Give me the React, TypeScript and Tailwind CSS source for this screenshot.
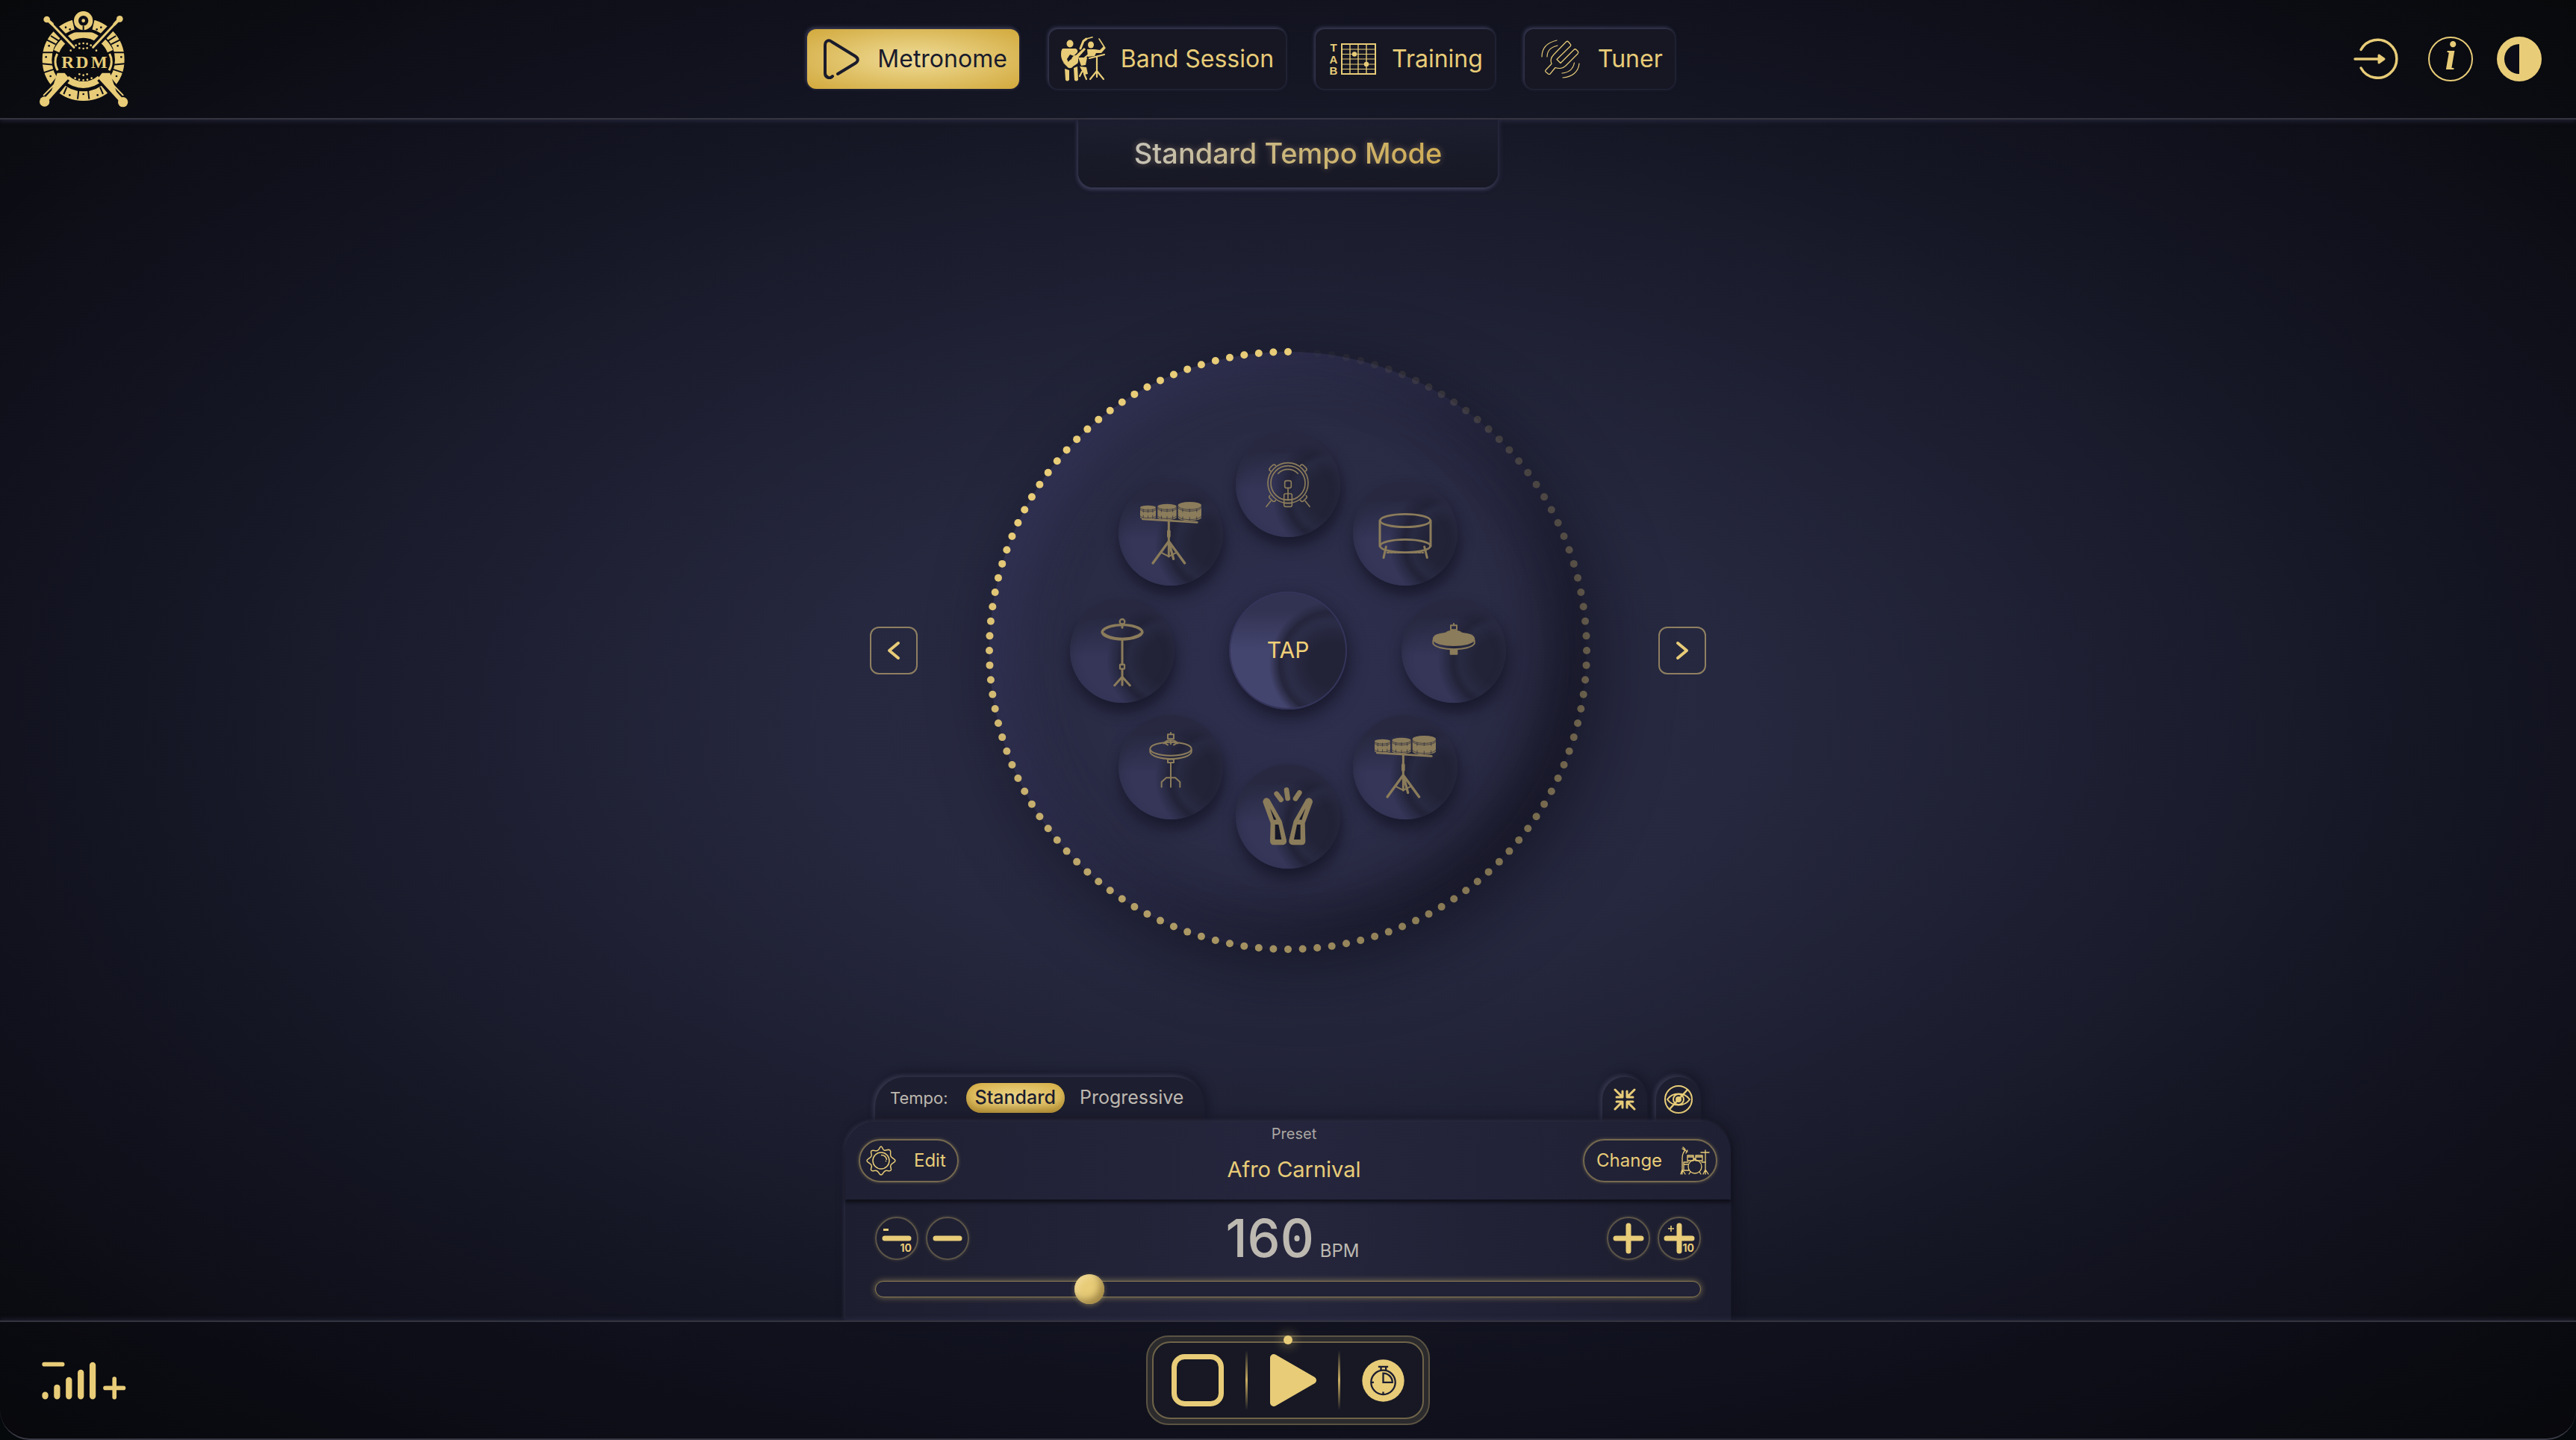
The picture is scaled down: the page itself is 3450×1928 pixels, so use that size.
import React from 'react';

const GOLD = '#e8cc78';
const NIGHT = '#0c0d16';
const DOT_COUNT = 128;

const Logo = () => (
    <svg viewBox="158 42 360 390" className="h-[130px] w-[120px]" role="img" aria-label="RDM">
        <g fill="none" stroke={GOLD}>
            <circle cx="337" cy="240" r="146" strokeWidth="38" />
            <path d="M274 161 A101 101 0 0 1 400 161" strokeWidth="27" />
            <path d="M270 315 A101 101 0 0 0 404 315" strokeWidth="27" />
            <path d="M229 206 A113 113 0 0 1 262 162" strokeWidth="24" />
            <path d="M445 206 A113 113 0 0 0 412 162" strokeWidth="24" />
            <path d="M232 216 C221 236 221 262 234 283" strokeWidth="9" />
            <path d="M442 216 C453 236 453 262 440 283" strokeWidth="9" />
        </g>
        {/* gaps cut through the rim */}
        <g stroke={NIGHT} strokeWidth="6">
            <path d="M165 211 H222 M452 211 H509 M170 256 L218 260 M504 256 L456 260 M176 292 L220 278 M498 292 L454 278 M190 160 L226 178 M484 160 L448 178 M206 144 L238 164 M468 144 L436 164" />
            <path d="M270 350 L258 378 M404 350 L416 378 M318 362 L314 398 M356 362 L360 398 M222 116 L250 146 M452 116 L424 146" />
        </g>
        <path d="M292 78 L304 130 H370 L382 78 Z" fill={NIGHT} />
        <g stroke={NIGHT} strokeWidth="30">
            <path d="M190 77 L300 192 M483 75 L373 192" />
            <path d="M181 408 L262 308 M497 411 L412 308" strokeWidth="50" />
        </g>
        <path d="M232 293 H262 L279 314 L200 392 M444 293 H412 L396 314 L478 392" fill={GOLD} />
        <g stroke={GOLD} strokeLinecap="round">
            <path d="M190 77 L212 97 M483 75 L462 97" strokeWidth="12" />
            <path d="M200 86 L299 190 M473 86 L376 190" strokeWidth="9" />
            <path d="M181 408 L262 318 M497 411 L412 318" strokeWidth="18" />
            <path d="M178 382 L236 324 M496 382 L440 324" strokeWidth="6" />
        </g>
        <g fill={GOLD}>
            <circle cx="190" cy="78" r="13" />
            <circle cx="483" cy="76" r="13" />
            <circle cx="181" cy="408" r="20" />
            <circle cx="496" cy="410" r="20" />
            <circle cx="337" cy="83" r="38" />
        </g>
        <circle cx="337" cy="83" r="20" fill={NIGHT} />
        <circle cx="337" cy="83" r="7" fill={GOLD} />
        <path d="M337 103 V122" stroke={NIGHT} strokeWidth="6" />
        <g fill={NIGHT}>
            {[[266, 110], [283, 118], [391, 118], [408, 110], [199, 184], [475, 184], [187, 229], [489, 229], [205, 306], [470, 306], [282, 382], [337, 378], [394, 382]].map(([x, y]) => (
                <circle key={`${x}-${y}`} cx={x} cy={y} r="4" />
            ))}
        </g>
        <g fill={GOLD}>
            {[[307, 182], [321, 176], [337, 174], [352, 176], [367, 182], [321, 193], [337, 195], [352, 193], [286, 203], [389, 203], [321, 298], [337, 302], [352, 298], [304, 314], [320, 320], [337, 322], [353, 320], [370, 314]].map(([x, y]) => (
                <circle key={`${x}-${y}`} cx={x} cy={y} r="4" />
            ))}
        </g>
        <g fill={GOLD} fontFamily="'Liberation Serif', serif" fontWeight="700" fontSize="70" textAnchor="middle">
            <text x="274" y="274">R</text>
            <text x="332" y="274">D</text>
            <text x="400" y="274">M</text>
        </g>
    </svg>
);

const MetronomeIcon = () => (
    <svg viewBox="0 0 48 54" className="h-[54px] w-12" fill="none" stroke="#1a1b2b" strokeWidth="4" strokeLinecap="round" strokeLinejoin="round">
        <path d="M12 50 C9 54 2 52 2 46 V9 C2 2 7 1 11 4 L42 23 C47 26 47 30 42 33 L19 47" />
    </svg>
);

const BandIcon = () => (
    <svg viewBox="0 0 60 60" className="size-[60px]" fill={GOLD} stroke="none">
        <ellipse cx="12" cy="9.5" rx="4.5" ry="5" />
        <path d="M3 16 H18 C21 16 23 18 22 21 L17 26 L12 24 L8 30 L10 35 L7 38 C3 35 0 30 0 24 C0 19 1 16 3 16 Z" />
        <path d="M2 34 L8 40 C10 43 14 43 16 40 L22 36 C24 33 22 30 24 27 L33 17 L31 15 L20 25 C17 25 15 27 14 30 C10 33 8 35 7 37 Z" />
        <path d="M5 43 L11 45 V58 Q8 61 6 58 Z M17 42 L22 40 L23 58 Q20 61 18 58 Z" />
        <ellipse cx="40" cy="11" rx="4" ry="4.5" />
        <path d="M35 17 H45 L52 18 L57 13 L60 15 L54 22 L47 22 L45 26 L36 27 Z M23 28 H35 L33 38 L27 39 Z M25 40 L34 41 L36 50 L31 51 Z" />
        <g fill="none" stroke={GOLD} strokeLinecap="round">
            <path d="M26 16 L30 6 L34 3" strokeWidth="3" />
            <path d="M34 3 L42 0.8 M58 14 L51 3" strokeWidth="1.6" />
            <path d="M38 29 L58 24 M32 28 L37 24" strokeWidth="2.2" />
            <path d="M48 27 V48 M48 46 L39 57 M48 46 L57 57 M48 46 V54 M28 47 L25 53 M31 50 L34 57" strokeWidth="2.2" />
        </g>
    </svg>
);

const TabIcon = () => (
    <svg viewBox="-2 -6 66 56" className="h-14 w-[66px] overflow-visible" fill="none" stroke={GOLD}>
        <g fill={GOLD} stroke="none" fontFamily="'Liberation Sans', sans-serif" fontWeight="700" fontSize="15" textAnchor="middle">
            <text x="6" y="12">T</text>
            <text x="6" y="28">A</text>
            <text x="6" y="43">B</text>
        </g>
        <rect x="17" y="2" width="45" height="40" strokeWidth="2" />
        <path d="M28 2 V42 M39 2 V42 M50 2 V42" strokeWidth="1.4" />
        <path d="M17 9 H62 M17 15.5 H62 M17 22 H62 M17 29 H62 M17 35.5 H62" strokeWidth="1" />
        <circle cx="34" cy="15.5" r="3.2" fill={GOLD} stroke="none" />
        <circle cx="50" cy="29" r="3.2" fill={GOLD} stroke="none" />
    </svg>
);

const TunerIcon = () => (
    <svg viewBox="-1 -1 52 52" className="size-[52px]" fill="none" stroke={GOLD} strokeWidth="1.2" strokeLinecap="round" strokeLinejoin="round">
        <path d="M32.5 2 Q34 0.5 35.5 2 L38 5 Q39.5 6.5 38 8 L20 25.5 L25 30.5 L43 12.5 Q44.5 11 46 12.5 L48 14.5 Q49.5 16 48 18 L32 34 C28 38 22 38 18 36.5 L11 45 Q10 46 8.5 45 L5 42 Q4 41 5 40 L13 31.5 C11 27 12 23 16 19 Z" />
        <path d="M20 0 C7 3 0 11 0 22 M21 7 C12 9 7 14 7 22 M50 31 C49 42 41 49 28 50 M43.5 30 C42 38 37 43 27 44" />
    </svg>
);

const tabs = [
    { label: 'Metronome', icon: <MetronomeIcon />, pad: 'pl-[22px] pr-4', gap: 'gap-6' },
    { label: 'Band Session', icon: <BandIcon />, pad: 'px-4', gap: 'gap-5' },
    { label: 'Training', icon: <TabIcon />, pad: 'px-4', gap: 'gap-5' },
    { label: 'Tuner', icon: <TunerIcon />, pad: 'pl-[22px] pr-4', gap: 'gap-6' },
];

const Kick = () => (
    <g strokeWidth="5">
        <circle cx="210" cy="203" r="81" />
        <circle cx="210" cy="203" r="69" />
        <path d="M170 165 A56 56 0 0 1 250 165" />
        <rect x="197" y="194" width="26" height="29" rx="7" />
        <path d="M210 223 V270 M194 270 H226 M194 284 H226" />
        <rect x="194" y="246" width="32" height="52" rx="6" />
        <path d="M141 275 L123 298 M279 275 L297 298" />
        <path d="M139 155 q-7 -6 -2 -12 l11 -11 q7 -5 12 1 M281 155 q7 -6 2 -12 l-11 -11 q-7 -5 -12 1 M137 254 q-6 6 0 10 l13 13 q6 2 10 -4 M283 254 q6 6 0 10 l-13 13 q-6 2 -10 -4" />
    </g>
);

const FloorTom = () => (
    <g strokeWidth="8">
        <ellipse cx="210" cy="159" rx="101" ry="26" />
        <ellipse cx="210" cy="261" rx="101" ry="26" />
        <path d="M108 159 V262 M312 159 V262" strokeWidth="9" />
        <path d="M133 264 L123 308 M287 264 L298 308" strokeWidth="9" />
        <path d="M137 288 H283" strokeDasharray="8 6" strokeWidth="6" />
    </g>
);

const drumShells = [
    { x: 87, y: 98, w: 63, h: 56, ry: 8 },
    { x: 157, y: 92, w: 76, h: 64, ry: 10 },
    { x: 239, y: 84, w: 94, h: 76, ry: 14 },
];

const Timbales = () => (
    <g>
        {drumShells.map(({ x, y, w, h, ry }) => (
            <g key={x}>
                <path
                    fill="#8b7c5b"
                    stroke="none"
                    d={`M${x} ${y + ry} a${w / 2} ${ry} 0 0 1 ${w} 0 V${y + h - ry} a${w / 2} ${ry} 0 0 1 ${-w} 0 Z`}
                />
                <g stroke="#25273c" strokeWidth="2">
                    <path d={`M${x} ${y + ry + 3} a${w / 2} ${ry} 0 0 0 ${w} 0 M${x} ${y + ry + 9} a${w / 2} ${ry} 0 0 0 ${w} 0 M${x} ${y + h - ry - 5} a${w / 2} ${ry} 0 0 0 ${w} 0`} />
                    <path d={`M${x + w / 2} ${y + 2 * ry} v12 M${x + w / 5} ${y + 2 * ry} v12 M${x + (w * 4) / 5} ${y + 2 * ry} v12 M${x + w / 2} ${y + h - 14} v12 M${x + w / 5} ${y + h - 16} v12 M${x + (w * 4) / 5} ${y + h - 16} v12`} />
                </g>
            </g>
        ))}
        <path d="M97 153 L316 166" strokeWidth="8" />
        <path d="M202 162 V303" strokeWidth="9" />
        <path d="M202 202 V222" strokeWidth="14" />
        <path d="M202 242 L138 330 M202 242 L266 330 M204 250 L221 313" strokeWidth="10" />
        <path d="M170 287 L202 303 L234 287" strokeWidth="6" />
    </g>
);

const Crash = () => (
    <g strokeWidth="9">
        <path fillRule="evenodd" fill="#8b7c5b" stroke="none" d="M124 136 a86 34 0 0 1 172 0 a86 34 0 0 1 -172 0 Z M134 136 c8 -16 50 -24 76 -24 c26 0 68 8 76 24 c-20 16 -50 22 -76 22 c-26 0 -56 -6 -76 -22 Z" />
        <circle cx="210" cy="94" r="10" strokeWidth="7" />
        <path d="M210 104 V118 M210 166 V266 M210 284 V348 M210 316 L179 350 M210 316 L241 350" />
        <rect x="201" y="266" width="18" height="18" rx="2" strokeWidth="7" />
    </g>
);

const HatTop = ({ y }: { y: number }) => (
    <g transform={`translate(0 ${y})`} strokeWidth="6">
        <path d="M210 4 V10" />
        <rect x="198" y="11" width="24" height="18" />
    </g>
);

const HiHat = () => (
    <g strokeWidth="6">
        <HatTop y={98} />
        <path fill="#8b7c5b" d="M128 166 C128 148 150 144 178 140 C190 130 200 131 210 131 C220 131 230 130 242 140 C270 144 292 148 292 166 C288 180 250 189 210 189 C170 189 132 180 128 166 Z" />
        <path d="M127 170 V182 C134 196 170 205 210 205 C250 205 286 196 293 182 V170" />
        <rect x="197" y="206" width="26" height="18" fill="#8b7c5b" />
    </g>
);

const HiHatStand = () => (
    <g strokeWidth="6">
        <HatTop y={68} />
        <ellipse cx="210" cy="137" rx="83" ry="27" />
        <path d="M127 140 V150 C132 166 166 177 210 177 C254 177 288 166 293 150 V140" />
        <path d="M182 115 C190 104 200 103 210 103 C220 103 230 104 238 115 M188 115 L198 121 M232 115 L222 121 M210 106 V118" />
        <rect x="198" y="179" width="24" height="13" />
        <path d="M210 193 V290 M173 290 V270 L192 253 H228 L247 270 V290" />
    </g>
);

const Hand = () => (
    <g>
        <path fill="#8b7c5b" strokeWidth="20" d="M119 151 L150 236 L148 309 Q148 315 154 315 H188 Q196 315 194 307 L176 233 L128 148 Q122 142 119 151 Z" />
        <path fill="#161828" stroke="none" d="M138 178 L163 223 L153 224 Z M158 243 H172 L184 303 H158 Z" />
    </g>
);

const Clap = () => (
    <g>
        <Hand />
        <g transform="translate(418 0) scale(-1 1)"><Hand /></g>
        <path d="M164 119 L182 143 M204 104 L209 138 M256 115 L240 139" strokeWidth="20" />
    </g>
);

const pads = [
    { name: 'Bass drum', angle: 0, art: <Kick /> },
    { name: 'Floor tom', angle: 45, art: <FloorTom /> },
    { name: 'Closed hi-hat', angle: 90, art: <HiHat /> },
    { name: 'Low timbales', angle: 135, art: <Timbales /> },
    { name: 'Clap', angle: 180, art: <Clap /> },
    { name: 'Open hi-hat', angle: 225, art: <HiHatStand /> },
    { name: 'Crash', angle: 270, art: <Crash /> },
    { name: 'High timbales', angle: 315, art: <Timbales /> },
];

// The ring brightens clockwise: nearly invisible at 12 o'clock, full gold past 9
const dotOpacity = (turn: number) => {
    if (turn === 0) return 1;
    if (turn < 0.25) return turn * 1.4;
    return Math.min(1, 0.35 + (turn - 0.25) * 1.15);
};

const Dial = () => (
    <div className="relative size-[800px] rounded-full bg-[radial-gradient(circle_at_50%_55%,#2f3050_0%,#2a2b45_45%,#27283e_100%)] shadow-[inset_28px_12px_70px_rgba(62,62,108,0.55),inset_-30px_-24px_80px_rgba(8,8,16,0.7),16px_24px_90px_rgba(8,8,18,0.5)]">
        <svg viewBox="-410 -410 820 820" className="absolute -inset-[10px]" fill={GOLD}>
            {Array.from({ length: DOT_COUNT }, (_, i) => {
                const a = (i / DOT_COUNT) * Math.PI * 2;
                return <circle key={i} cx={400 * Math.sin(a)} cy={-400 * Math.cos(a)} r="5" opacity={dotOpacity(i / DOT_COUNT)} />;
            })}
        </svg>
        {pads.map(({ name, angle, art }) => {
            const rad = (angle * Math.PI) / 180;
            return (
                <button
                    key={name}
                    aria-label={name}
                    style={{ left: `${50 + 27.75 * Math.sin(rad)}%`, top: `${50 - 27.75 * Math.cos(rad)}%` }}
                    className="absolute size-[140px] -translate-x-1/2 -translate-y-1/2 rounded-full bg-[radial-gradient(circle_at_92%_60%,#222336_0px,#222337_30px,#282a42_50px,#222338_60px,transparent_80px),linear-gradient(to_top,#353658_45%,#282941_82%)] shadow-[inset_0_10px_14px_#292a42,2px_12px_18px_rgba(14,14,28,0.6)]"
                >
                    <svg viewBox="0 0 420 420" className="size-full" fill="none" stroke="#8b7c5b" strokeLinecap="round" strokeLinejoin="round">
                        {art}
                    </svg>
                </button>
            );
        })}
        <button className="absolute top-1/2 left-1/2 size-[158px] -translate-x-1/2 -translate-y-1/2 rounded-full border-2 border-[#34345a] bg-[radial-gradient(circle_at_88%_62%,#222336_0px,#222337_30px,#2b2c47_58px,#25263c_70px,transparent_84px),linear-gradient(to_top,#44456f_50%,#323352_85%)] text-[30px] text-[#f0d078] shadow-[2px_10px_24px_rgba(12,12,24,0.7)]">
            TAP
        </button>
    </div>
);

const ArrowButton = ({ label, d }: { label: string; d: string }) => (
    <button aria-label={label} className="flex size-16 items-center justify-center rounded-xl border-2 border-[#8f8061]">
        <svg viewBox="0 0 18 26" className="h-[26px] w-[18px]" fill="none" stroke={GOLD} strokeWidth="4" strokeLinecap="round" strokeLinejoin="round">
            <path d={d} />
        </svg>
    </button>
);

const GearIcon = () => (
    <svg viewBox="0 0 40 40" className="size-10" fill="none" stroke={GOLD} strokeWidth="1.5" strokeLinejoin="round">
        <path d="M20 1 C22 1 21.500 5 24 6 C27 7 29 4 32 6 C34 8 31.500 11 33 14 C34.500 17 39 17.500 39 20 C39 22.500 34.500 23 33 26 C31.500 29 35 31 33 33 C31 35 28 32.500 26 33.500 C22.500 35 22.500 39 20 39 C17.500 39 17.500 35 14 33.500 C11 32.500 9 35 7 33 C5 31 8.500 29 7 26 C5.500 23 1 22.500 1 20 C1 17.500 5.500 17 7 14 C8.500 11 5 9 7 7 C9 5 12 7.500 15 6.500 C18.500 5 18 1 20 1 Z" />
        <circle cx="20" cy="20" r="11" />
        <path d="M20 12.500 C24 12.500 27 15 27.500 19 M26 20 L27 21" />
    </svg>
);

const DrumKitIcon = () => (
    <svg viewBox="0 0 40 40" className="size-10" fill="none" stroke={GOLD} strokeWidth="1.3" strokeLinecap="round" strokeLinejoin="round">
        <circle cx="20" cy="28" r="9" />
        <path d="M10 13 H18 V20 H10 Z M21 13 H30 V20 H21 Z M10 15 H18 M21 15 H30 M18 17 H21 M18 19 H21" />
        <path d="M3 4 L10 8 M4 2 L7 5 M10 6 L8 10 M6 7 C3 11 3 14 3 20 V38 M3 32 L1 38 M3 32 L7 38 M28 9 H39 M34 6 V38 M34 32 L31 38 M34 32 L38 38" />
        <path d="M11 22 H5 V33 H12 M5 25 H11 M29 22 H34 M14 35 L12 38 M26 35 L28 38" />
    </svg>
);

const CollapseIcon = () => (
    <svg viewBox="0 0 30 30" className="size-[30px]" fill="none" stroke={GOLD} strokeWidth="3" strokeLinecap="round" strokeLinejoin="round">
        <path d="M2 2 L11 11 M12 4 V12 H4 M28 2 L19 11 M18 4 V12 H26 M2 28 L11 19 M12 26 V18 H4 M28 28 L19 19 M18 26 V18 H26" />
    </svg>
);

const EyeOffIcon = () => (
    <svg viewBox="0 0 40 40" className="size-10" fill="none" stroke={GOLD} strokeWidth="2">
        <circle cx="20" cy="20" r="18" />
        <path d="M5 20 C12 10 28 10 35 20 C28 30 12 30 5 20 Z" />
        <circle cx="20" cy="20" r="7" />
        <circle cx="20" cy="20" r="3" fill={GOLD} />
        <path d="M8 33 L32 7" strokeWidth="2.500" />
    </svg>
);

const ROUND = 'flex size-[58px] items-center justify-center rounded-full border-2 border-[#5c5548] shadow-[0_0_4px_rgba(232,204,120,0.2)]';
const PILL = 'flex h-[58px] items-center rounded-full border-2 border-[#75694f] text-2xl text-[#e8cc78] shadow-[0_0_4px_rgba(232,204,120,0.3)]';

const StepButton = ({ label, plus, ten }: { label: string; plus?: boolean; ten?: boolean }) => (
    <button aria-label={label} className={ROUND}>
        <svg viewBox="0 0 54 54" className="size-full" fill="none" stroke={GOLD} strokeLinecap="round">
            <path d={plus ? 'M10 27 H44 M27 10 V44' : 'M11 27 H43'} strokeWidth="7" />
            {ten && <path d={plus ? 'M12 14 H20 M16 10 V18' : 'M9 15.500 H16'} strokeWidth={plus ? 1.6 : 3} strokeLinecap="butt" />}
            {ten && (
                <text x="47" y="45" textAnchor="end" fill={GOLD} stroke="none" fontSize="14" fontWeight="700" fontFamily="Inter, sans-serif">
                    10
                </text>
            )}
        </svg>
    </button>
);

const TAB_SHADOW = 'shadow-[-3px_-3px_5px_rgba(96,96,130,0.35),4px_-6px_14px_rgba(10,10,20,0.4)]';

const TempoPanel = () => {
    const [bpm, setBpm] = React.useState(160);
    const [mode, setMode] = React.useState('Standard');

    return (
        <section className="mx-auto w-[1186px]">
            <div className="flex items-end justify-between px-10">
                <div className={`flex h-[60px] items-center rounded-t-[40px] bg-[#1d1e2f] pr-2 pb-1 pl-5 ${TAB_SHADOW}`}>
                    <span className="pr-6 text-[22px] text-[#bdb8b0]">Tempo:</span>
                    {['Standard', 'Progressive'].map((m) => (
                        <button
                            key={m}
                            onClick={() => setMode(m)}
                            className={`h-10 rounded-[20px] text-[25px] ${m === mode
                                ? 'bg-[radial-gradient(ellipse_at_center,#ecd68c_0%,#d5ac41_100%)] px-3 font-medium text-[#1c1d2e] shadow-[inset_0_-8px_10px_rgba(120,90,20,0.35)]'
                                : 'px-5 text-[#bdb8b0]'}`}
                        >
                            {m}
                        </button>
                    ))}
                </div>
                <div className="flex gap-3">
                    <button aria-label="Collapse" className={`flex h-[60px] w-[60px] items-center justify-center rounded-t-[30px] bg-[#1d1e2f] ${TAB_SHADOW}`}>
                        <CollapseIcon />
                    </button>
                    <button aria-label="Hide" className={`flex h-[60px] w-[60px] items-center justify-center rounded-t-[30px] bg-[#1d1e2f] ${TAB_SHADOW}`}>
                        <EyeOffIcon />
                    </button>
                </div>
            </div>

            <div className="relative rounded-t-[40px] bg-[linear-gradient(to_right,#1d1e2f,#25263c_50%,#1c1d2e)] shadow-[-2px_-2px_5px_rgba(96,96,130,0.3),4px_-4px_16px_rgba(10,10,20,0.45)]">
                <div className="grid h-[104px] grid-cols-[1fr_auto_1fr] items-center rounded-t-[40px] bg-[linear-gradient(to_right,#1f2033,#25263d_50%,#1f2033)] px-[18px] shadow-[0_4px_4px_rgba(8,8,14,0.7)]">
                    <button className={`${PILL} w-[134px] gap-6 justify-self-start pl-2`}>
                        <GearIcon />
                        Edit
                    </button>
                    <div className="self-start pt-1 pl-4 text-center">
                        <p className="text-xl leading-6 text-[#aaa6a2]">Preset</p>
                        <p className="pt-4 text-[29px] leading-10 text-[#e8cc78]">Afro Carnival</p>
                    </div>
                    <button className={`${PILL} w-[180px] justify-between justify-self-end pr-2 pl-4`}>
                        Change
                        <DrumKitIcon />
                    </button>
                </div>

                <div className="px-10 pt-5 pb-[22px]">
                    <div className="grid grid-cols-[1fr_auto_1fr] items-center">
                        <div className="flex gap-[10px]">
                            <StepButton label="Minus ten" ten />
                            <StepButton label="Minus one" />
                        </div>
                        <div className="flex h-16 items-baseline gap-2 pl-3 text-[#bdb9b1]">
                            <output className="text-[70px] leading-16 font-medium">
                                {String(bpm).split('').map((digit, i) => (
                                    <span key={i} className="relative">
                                        {digit}
                                        {digit === '0' && <i className="absolute top-1/2 left-1/2 h-2 w-[7px] -translate-x-1/2 -translate-y-1/2 rounded-sm bg-[#bdb9b1]" />}
                                    </span>
                                ))}
                            </output>
                            <span className="text-2xl">BPM</span>
                        </div>
                        <div className="flex justify-end gap-[10px]">
                            <StepButton label="Plus one" plus />
                            <StepButton label="Plus ten" plus ten />
                        </div>
                    </div>
                    <div className="mt-4 flex h-10 items-center">
                        <input
                            type="range"
                            aria-label="Tempo in BPM"
                            min="20"
                            max="580"
                            value={bpm}
                            onChange={(e) => setBpm(Number(e.target.value))}
                            className="h-[22px] w-full appearance-none rounded-full border border-[#8b7b52] bg-[#212236] shadow-[0_0_8px_rgba(232,204,120,0.5)] [&::-webkit-slider-thumb]:size-10 [&::-webkit-slider-thumb]:appearance-none [&::-webkit-slider-thumb]:rounded-full [&::-webkit-slider-thumb]:bg-[#e8cc78] [&::-webkit-slider-thumb]:shadow-[inset_-6px_-6px_10px_rgba(120,95,40,0.6),inset_4px_4px_8px_rgba(250,232,180,0.5),0_2px_6px_rgba(232,204,120,0.35)]"
                        />
                    </div>
                </div>
            </div>
        </section>
    );
};

const VolumeIcon = () => (
    <svg viewBox="168 250 340 154" className="h-[51px] w-[113px]" stroke={GOLD} strokeLinecap="round">
        <path d="M177 261 H251 M424 357 H498 M461 320 V394" strokeWidth="17" />
        <path d="M181 385 V390 M229 355 V390 M277 325 V390 M325 295 V390 M373 265 V390" strokeWidth="25" />
    </svg>
);

const TimerIcon = () => (
    <svg viewBox="974 211 172 172" className="size-[57px]" fill="none" stroke="#1c1d30" strokeWidth="7">
        <circle cx="1060" cy="297" r="85" fill={GOLD} stroke="none" />
        <circle cx="1060" cy="304" r="49" />
        <path d="M1040 241 H1080 M1051 243 V256 M1071 243 V256 M1060 304 V267 A37 37 0 0 1 1097 304 Z M1060 342 V352 M1012 304 H1022" />
    </svg>
);

const Divider = () => <span className="h-20 w-[3px] bg-[linear-gradient(transparent,#c9ad62_50%,transparent)]" />;

const Transport = () => (
    <div className="relative rounded-[30px] border-2 border-[#5b5343] bg-[#2b2a2d] p-[6px]">
        <div className="flex h-[104px] w-[364px] items-center justify-between rounded-3xl border-2 border-[#6f6449] bg-[#171824] px-6">
            <button aria-label="Stop">
                <svg viewBox="0 0 70 70" className="size-[70px]" fill="none" stroke={GOLD} strokeWidth="7">
                    <rect x="3.500" y="3.500" width="63" height="63" rx="14" />
                </svg>
            </button>
            <Divider />
            <button aria-label="Play">
                <svg viewBox="0 0 64 72" className="h-[72px] w-16" fill={GOLD} stroke={GOLD} strokeWidth="10" strokeLinejoin="round">
                    <path d="M6 6 L58 36 L6 66 Z" />
                </svg>
            </button>
            <Divider />
            <button aria-label="Timer">
                <TimerIcon />
            </button>
        </div>
        <span className="absolute -top-[2px] left-1/2 size-3 -translate-x-1/2 rounded-full bg-[#e8cc78] shadow-[0_0_16px_rgba(232,204,120,0.8)]" />
    </div>
);

export default function App() {
    return (
        <div className="bg-[#05090c] font-[Inter,'Noto_Sans',sans-serif]">
            <div className="flex min-h-screen flex-col overflow-hidden rounded-b-[40px] border-b-2 border-[#3a3a46] bg-[radial-gradient(ellipse_farthest-corner_at_50%_50%,#2b2c47_0%,#26283f_25%,#1b1c2d_50%,#10111c_75%,#08090b_100%)]">
                <header className="flex h-40 items-center justify-between border-b-2 border-[#34343f] pr-[46px] pl-[52px] shadow-[0_2px_6px_rgba(60,60,90,0.5)]">
                    <a href="#home">
                        <Logo />
                    </a>
                    <nav className="flex gap-10">
                        {tabs.map(({ label, icon, pad, gap }, i) => (
                            <button
                                key={label}
                                className={`flex h-20 items-center rounded-xl text-[32px] shadow-[-2px_-3px_5px_rgba(84,84,120,0.45),0_0_4px_rgba(84,84,120,0.5)] ${pad} ${gap} ${i === 0
                                    ? 'bg-[radial-gradient(ellipse_at_center,#efdc98_0%,#d2a93c_100%)] text-[#1a1b2b]'
                                    : 'bg-[#161723] text-[#e8cc78]'}`}
                            >
                                {icon}
                                {label}
                            </button>
                        ))}
                    </nav>
                    <div className="flex items-center">
                        <button aria-label="Sign in">
                            <svg viewBox="0 0 60 60" className="size-[60px]" fill="none" stroke={GOLD} strokeLinecap="round">
                                <path d="M10 17.500 A25.500 25.500 0 1 1 10 42" strokeWidth="3.500" />
                                <path d="M2 30 H34" strokeWidth="3.500" />
                                <path d="M34 25 L41 30 L34 35 Z" fill={GOLD} strokeWidth="3" strokeLinejoin="round" />
                            </svg>
                        </button>
                        <button aria-label="About" className="ml-10 flex size-[60px] items-center justify-center rounded-full border-2 border-[#e8cc78] pb-2 font-['Liberation_Serif',serif] text-[54px] leading-none font-bold text-[#e8cc78] italic">
                            i
                        </button>
                        <button aria-label="Contrast" className="ml-8">
                            <svg viewBox="0 0 60 60" className="size-[60px]">
                                <circle cx="30" cy="30" r="30" fill={GOLD} />
                                <path d="M30 10 A20 20 0 0 0 30 50 Z" fill={NIGHT} />
                            </svg>
                        </button>
                    </div>
                </header>

                <main className="flex flex-1 flex-col">
                    <div className="mx-auto flex h-[91px] w-[562px] items-center justify-center rounded-b-[20px] bg-[linear-gradient(#1c1d2e,#171824)] shadow-[-2px_3px_5px_rgba(84,84,120,0.5),2px_2px_6px_rgba(70,70,100,0.4)]">
                        <h1 className="bg-[linear-gradient(to_right,#c5c1b6,#cbb67a_50%,#d0ad55)] bg-clip-text text-[38px] font-medium text-transparent drop-shadow-[0_0_4px_rgba(232,204,160,0.35)]">
                            Standard Tempo Mode
                        </h1>
                    </div>
                    <div className="flex flex-1 items-center justify-center gap-24 pt-12">
                        <ArrowButton label="Previous" d="M15 3 L3 13 L15 23" />
                        <Dial />
                        <ArrowButton label="Next" d="M3 3 L15 13 L3 23" />
                    </div>
                    <TempoPanel />
                </main>

                <footer className="relative grid h-[158px] grid-cols-[1fr_auto_1fr] items-center border-t-2 border-[#34343f] bg-[rgba(8,8,14,0.25)] shadow-[0_-2px_6px_rgba(60,60,90,0.4)]">
                    <button aria-label="Volume" className="ml-14 justify-self-start">
                        <VolumeIcon />
                    </button>
                    <Transport />
                </footer>
            </div>
        </div>
    );
}
